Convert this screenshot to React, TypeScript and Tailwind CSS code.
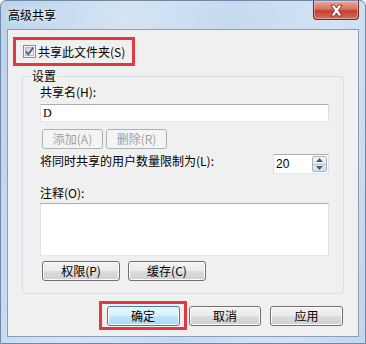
import React from "react";

const btn =
  "h-[20px] rounded-[3px] border border-[#707070] bg-[linear-gradient(to_bottom,#f2f2f2_0%,#ebebeb_50%,#dddddd_50%,#cfcfcf_100%)] shadow-[inset_0_0_0_1px_#fcfcfc] text-[12px] leading-[16px] text-black flex items-center justify-center";

const btnDisabled =
  "h-[20px] rounded-[3px] border border-[#adb2b5] bg-[#f4f4f4] text-[12px] leading-[16px] text-[#a0a0a0] flex items-center justify-center";

const btnDefault =
  "h-[20px] rounded-[3px] border border-[#3c7fb1] bg-[linear-gradient(to_bottom,#eaf6fd_0%,#d9f0fc_50%,#bee6fd_50%,#a7d9f5_100%)] shadow-[inset_0_0_0_1px_#fcfcfc] text-[12px] leading-[16px] text-black flex items-center justify-center";

const textbox =
  "border border-[#abadb3] border-l-[#dbdfe6] border-r-[#dbdfe6] border-b-[#e3e9ef] bg-white";

const Checkbox = () => (
  <svg width="13" height="13" viewBox="0 0 13 13" className="shrink-0">
    <defs>
      <linearGradient id="cb" x1="0" y1="0" x2="1" y2="1">
        <stop offset="0" stopColor="#cbcfd5" />
        <stop offset="1" stopColor="#f6f6f6" />
      </linearGradient>
    </defs>
    <rect x="0.5" y="0.5" width="12" height="12" fill="#f4f4f4" stroke="#8e8f8f" />
    <rect x="2.5" y="2.5" width="8" height="8" fill="url(#cb)" stroke="#b5b9bf" strokeWidth="1" />
    <path d="M3 6.5 L5.3 9.2 L10.2 2.6" fill="none" stroke="#4a5f84" strokeWidth="1.8" />
  </svg>
);

const CloseButton = () => (
  <div className="absolute top-0 right-[6px] w-[46px] h-[19px] rounded-b-[4px] border border-t-0 border-[#6b2a24] bg-[linear-gradient(to_bottom,#e9a99b_0%,#d7725f_45%,#c2402f_55%,#d8705c_100%)] shadow-[inset_0_0_0_1px_rgba(255,255,255,0.35)] flex items-center justify-center">
    <svg width="15" height="13" viewBox="0 0 15 13">
      <path
        d="M2 1 H5.5 L7.5 4 L9.5 1 H13 L9.5 6.5 L13 12 H9.5 L7.5 9 L5.5 12 H2 L5.5 6.5 Z"
        fill="#ffffff"
        stroke="#5a2a2a"
        strokeWidth="0.8"
        strokeLinejoin="round"
      />
    </svg>
  </div>
);

const SpinBox = () => (
  <div className={`${textbox} w-[56px] h-[20px] mt-[1px] flex items-center`}>
    <span className="flex-1 pl-[2px] text-[12px] leading-[16px] text-black font-['Liberation_Sans',sans-serif]">20</span>
    <div className="w-[15px] h-[16px] mr-[1px] flex flex-col border border-[#a9b2bf] rounded-[2px] bg-[linear-gradient(to_bottom,#f3f6fa,#d6dee8)]">
      <div className="flex-1 flex items-center justify-center border-b border-[#b9c1cc]">
        <svg width="7" height="4" viewBox="0 0 7 4">
          <path d="M0 4 L3.5 0 L7 4 Z" fill="#4d5c72" />
        </svg>
      </div>
      <div className="flex-1 flex items-center justify-center">
        <svg width="7" height="4" viewBox="0 0 7 4">
          <path d="M0 0 L3.5 4 L7 0 Z" fill="#4d5c72" />
        </svg>
      </div>
    </div>
  </div>
);

export default function App() {
  return (
    <div className="w-[366px] h-[344px] flex flex-col rounded-t-[6px] border border-[#6f8aa6] bg-[linear-gradient(100deg,#bcd3eb_0%,#d5e4f4_30%,#c6daef_55%,#d3e3f4_80%,#c1d6ec_100%)] font-['Noto_Sans_CJK_SC','Noto_Sans',sans-serif] text-black select-none">
      <div className="relative h-[28px] shrink-0 flex items-center pl-[7px]">
        <span className="text-[12px] leading-[16px] text-black [text-shadow:0_0_6px_#ffffff]">高级共享</span>
        <CloseButton />
      </div>

      <div className="mx-[6px] mb-[6px] flex-1 border border-[#8a9fb6] bg-[#f0f0f0] flex flex-col">
        <div className="ml-[5px] mt-[7px] w-[122px] h-[29px] border-[3px] border-[#de3a3f] flex items-center pl-[7px] gap-[2px]">
          <Checkbox />
          <span className="text-[12px] leading-[16px]">共享此文件夹(S)</span>
        </div>

        <fieldset className="mx-[14px] mt-[2px] border border-[#d5dfe5] rounded-[3px] p-0">
          <legend className="ml-[7px] px-[2px] text-[12px] leading-[16px]">设置</legend>
          <div className="pl-[17px] pr-[14px] pb-[12px] flex flex-col">
            <span className="text-[12px] leading-[16px]">共享名(H):</span>
            <div className={`${textbox} mt-[4px] h-[18px] flex items-center pl-[2px]`}>
              <span className="text-[12px] leading-[16px] font-['Liberation_Serif',serif]">D</span>
            </div>
            <div className="mt-[7px] flex gap-[3px] pl-[2px]">
              <div className={`${btnDisabled} w-[61px]`}>添加(A)</div>
              <div className={`${btnDisabled} w-[61px]`}>删除(R)</div>
            </div>
            <div className="mt-[4px] flex items-start justify-between">
              <span className="text-[12px] leading-[16px]">将同时共享的用户数量限制为(L):</span>
              <SpinBox />
            </div>
            <span className="mt-[11px] text-[12px] leading-[16px]">注释(O):</span>
            <div className={`${textbox} mt-[2px] h-[53px]`} />
            <div className="mt-[5px] flex gap-[8px] pl-[2px]">
              <div className={`${btn} w-[78px]`}>权限(P)</div>
              <div className={`${btn} w-[78px]`}>缓存(C)</div>
            </div>
          </div>
        </fieldset>

        <div className="mt-[7px] pr-[15px] flex justify-end items-start">
          <div className="w-[88px] h-[29px] border-[3px] border-[#de3a3f] flex items-center justify-center">
            <div className={`${btnDefault} w-[73px]`}>确定</div>
          </div>
          <div className="ml-[2px] mt-[5px] flex gap-[9px]">
            <div className={`${btn} w-[72px]`}>取消</div>
            <div className={`${btn} w-[73px]`}>应用</div>
          </div>
        </div>
      </div>
    </div>
  );
}
